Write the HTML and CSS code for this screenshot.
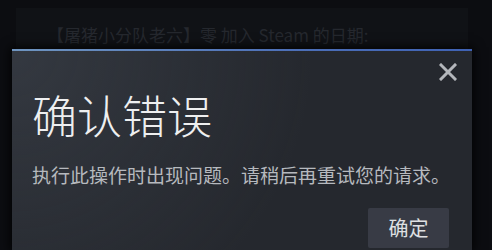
FILE: index.html
```html
<!DOCTYPE html>
<html lang="zh-CN">
<head>
<meta charset="utf-8">
<link rel="stylesheet" href="styles.css">
</head>
<body>
<div class="page">
  <div class="profile-card">
    <div class="joined">【屠猪小分队老六】零 加入 Steam 的日期:</div>
  </div>
  <div class="dialog">
    <button class="close" aria-label="关闭">
      <svg width="18" height="18" viewBox="0 0 18 18"><path d="M2 2 L16 16 M16 2 L2 16" stroke="currentColor" stroke-width="3" fill="none" stroke-linecap="square"/></svg>
    </button>
    <h1 class="title">确认错误</h1>
    <p class="message">执行此操作时出现问题。请稍后再重试您的请求。</p>
    <div class="actions">
      <button class="ok">确定</button>
    </div>
  </div>
</div>
</body>
</html>
```
FILE: styles.css
```css
* { box-sizing: border-box; }
html, body {
  margin: 0;
  height: 100%;
  background: #0c0d11;
  overflow: hidden;
}
body {
  font-family: "Noto Sans CJK SC", "Noto Sans", sans-serif;
}
.page {
  position: relative;
  height: 250px;
  overflow: hidden;
  padding: 8px 24px 0 16px;
}
.profile-card {
  background: #101216;
  height: 242px;
  padding: 17px 0 0 31px;
}
.joined {
  font-size: 17px;
  line-height: 20px;
  color: #25282e;
}
.dialog {
  position: absolute;
  left: 12px;
  top: 49px;
  width: 460px;
  height: 201px;
  overflow: hidden;
  border-top: 2px solid #5b7fb6;
  border-image: linear-gradient(90deg, #6f95c0, #4d70b8 60%, #3f62b4) 1;
  background: radial-gradient(circle at top left, rgba(74, 81, 92, 0.4) 0%, rgba(75, 81, 92, 0) 60%), #25282e;
  box-shadow: 0 0 10px 2px rgba(0, 0, 0, 0.85);
  padding: 41px 23px 0 20px;
}
.close {
  position: absolute;
  top: 12px;
  right: 15px;
  width: 18px;
  height: 18px;
  padding: 0;
  border: 0;
  background: none;
  color: #b4b7bc;
  display: flex;
}
.title {
  margin: 0;
  font-size: 45px;
  line-height: 45px;
  font-weight: 300;
  color: #eeeff0;
}
.message {
  margin: 28px 0 0;
  font-size: 19px;
  line-height: 19px;
  color: #b6b9be;
  white-space: nowrap;
}
.actions {
  display: flex;
  justify-content: flex-end;
  margin-top: 24px;
}
.ok {
  width: 81px;
  height: 40px;
  border: 0;
  border-radius: 2px;
  background: #383b45;
  color: #dfe0e2;
  font-family: inherit;
  font-size: 20px;
  line-height: 20px;
  padding: 0;
}
```
